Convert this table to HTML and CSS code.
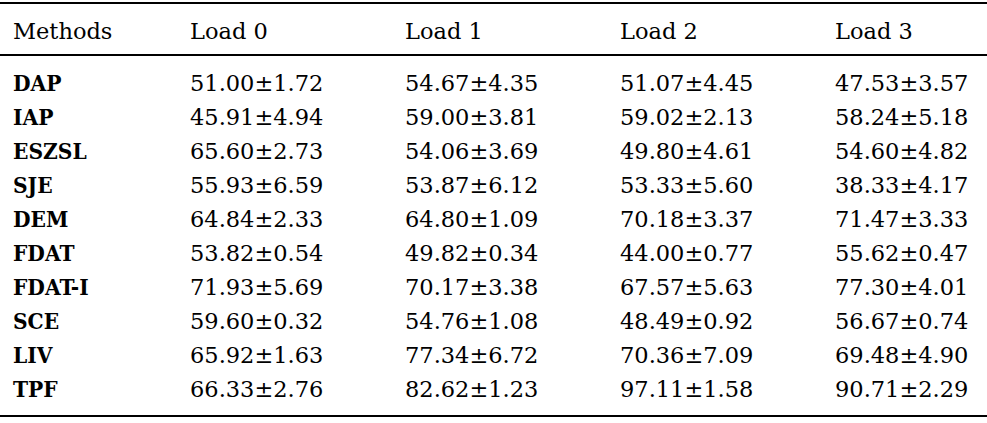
FILE: index.html
```html
<!DOCTYPE html>
<html>
<head>
<meta charset="utf-8">
<link rel="stylesheet" href="styles.css">
</head>
<body>
<div class="results">
  <div class="row head">
    <div class="cell method">Methods</div>
    <div class="cell">Load 0</div>
    <div class="cell">Load 1</div>
    <div class="cell">Load 2</div>
    <div class="cell">Load 3</div>
  </div>
  <div class="body">
    <div class="row"><div class="cell method name">DAP</div><div class="cell">51.00±1.72</div><div class="cell">54.67±4.35</div><div class="cell">51.07±4.45</div><div class="cell">47.53±3.57</div></div>
    <div class="row"><div class="cell method name">IAP</div><div class="cell">45.91±4.94</div><div class="cell">59.00±3.81</div><div class="cell">59.02±2.13</div><div class="cell">58.24±5.18</div></div>
    <div class="row"><div class="cell method name">ESZSL</div><div class="cell">65.60±2.73</div><div class="cell">54.06±3.69</div><div class="cell">49.80±4.61</div><div class="cell">54.60±4.82</div></div>
    <div class="row"><div class="cell method name">SJE</div><div class="cell">55.93±6.59</div><div class="cell">53.87±6.12</div><div class="cell">53.33±5.60</div><div class="cell">38.33±4.17</div></div>
    <div class="row"><div class="cell method name">DEM</div><div class="cell">64.84±2.33</div><div class="cell">64.80±1.09</div><div class="cell">70.18±3.37</div><div class="cell">71.47±3.33</div></div>
    <div class="row"><div class="cell method name">FDAT</div><div class="cell">53.82±0.54</div><div class="cell">49.82±0.34</div><div class="cell">44.00±0.77</div><div class="cell">55.62±0.47</div></div>
    <div class="row"><div class="cell method name">FDAT-I</div><div class="cell">71.93±5.69</div><div class="cell">70.17±3.38</div><div class="cell">67.57±5.63</div><div class="cell">77.30±4.01</div></div>
    <div class="row"><div class="cell method name">SCE</div><div class="cell">59.60±0.32</div><div class="cell">54.76±1.08</div><div class="cell">48.49±0.92</div><div class="cell">56.67±0.74</div></div>
    <div class="row"><div class="cell method name">LIV</div><div class="cell">65.92±1.63</div><div class="cell">77.34±6.72</div><div class="cell">70.36±7.09</div><div class="cell">69.48±4.90</div></div>
    <div class="row"><div class="cell method name">TPF</div><div class="cell">66.33±2.76</div><div class="cell">82.62±1.23</div><div class="cell">97.11±1.58</div><div class="cell">90.71±2.29</div></div>
  </div>
</div>
</body>
</html>
```

FILE: styles.css
```css
html, body {
  margin: 0;
  padding: 0;
  background: #fff;
}

body {
  padding-top: 2px;
  font-family: "DejaVu Serif", serif;
  font-size: 22.5px;
  line-height: 34px;
  color: #000;
}

.results {
  border-top: 2px solid #000;
  border-bottom: 2px solid #000;
}

.row {
  display: grid;
  grid-template-columns: 190px 215px 215px 215px 1fr;
}

.cell {
  white-space: nowrap;
}

.method {
  padding-left: 13px;
}

.name {
  font-weight: bold;
  font-stretch: condensed;
}

.head {
  padding: 10px 0 6px;
  border-bottom: 2px solid #000;
}

.body {
  padding: 10px 0 9px;
}
```
